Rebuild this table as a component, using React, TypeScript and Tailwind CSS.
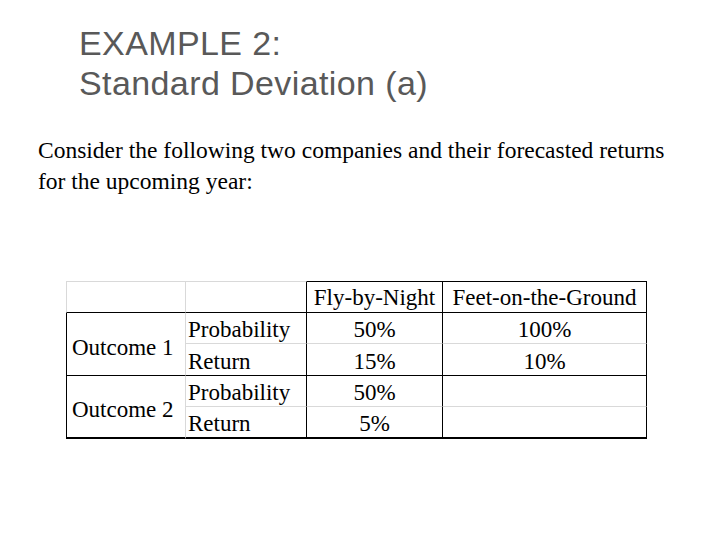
import React from 'react';

const DARK = 'border-black';
const LIGHT = 'border-[#d9d9d9]';

type Row = {
  label: string;
  fly: string;
  feet: string;
};

const OUTCOMES: { name: string; rows: Row[] }[] = [
  {
    name: 'Outcome 1',
    rows: [
      { label: 'Probability', fly: '50%', feet: '100%' },
      { label: 'Return', fly: '15%', feet: '10%' },
    ],
  },
  {
    name: 'Outcome 2',
    rows: [
      { label: 'Probability', fly: '50%', feet: '' },
      { label: 'Return', fly: '5%', feet: '' },
    ],
  },
];

function ReturnsTable() {
  return (
    <table
      className="ml-[66px] border-separate border-spacing-0 text-[23px] leading-none text-black"
      style={{ fontFamily: '"Liberation Serif", "Times New Roman", serif' }}
    >
      <colgroup>
        <col className="w-[120px]" />
        <col className="w-[121px]" />
        <col className="w-[136px]" />
        <col className="w-[204px]" />
      </colgroup>
      <thead>
        <tr className="h-[32px]">
          <th className={`border-l border-t border-r border-b ${LIGHT} border-b-black p-0`} />
          <th className={`border-t border-r border-b ${LIGHT} border-r-black border-b-black p-0`} />
          <th className={`border-t border-r border-b ${DARK} p-0 text-center font-normal`}>Fly-by-Night</th>
          <th className={`border-t border-r border-b ${DARK} p-0 text-center font-normal`}>Feet-on-the-Ground</th>
        </tr>
      </thead>
      <tbody>
        {OUTCOMES.map((outcome, gi) => {
          const last = gi === OUTCOMES.length - 1;
          const groupBottom = last ? 'border-b-2' : 'border-b';
          return outcome.rows.map((row, ri) => {
            const bottom = ri === 0 ? `border-b ${LIGHT}` : `${groupBottom} border-b-black`;
            return (
              <tr key={`${gi}-${ri}`} className={ri === 0 ? 'h-[31px]' : 'h-[32px]'}>
                {ri === 0 && (
                  <td
                    rowSpan={2}
                    className={`border-l border-r ${groupBottom} border-l-black ${LIGHT} border-b-black pl-[5px] pt-[6px] align-middle`}
                  >
                    {outcome.name}
                  </td>
                )}
                <td className={`border-r border-r-black ${bottom} pl-[2px] pt-[3px]`}>{row.label}</td>
                <td className={`border-r border-r-black ${bottom} pt-[3px] text-center`}>{row.fly}</td>
                <td className={`border-r border-r-black ${bottom} pt-[3px] text-center`}>{row.feet}</td>
              </tr>
            );
          });
        })}
      </tbody>
    </table>
  );
}

export default function App() {
  return (
    <div className="h-[540px] w-[720px] overflow-hidden bg-white">
      <h1
        className="ml-[79px] pt-[23px] text-[34px] font-normal leading-[40px] tracking-[0.4px] text-[#595959]"
        style={{ fontFamily: '"Liberation Sans", Arial, sans-serif' }}
      >
        EXAMPLE 2:
        <br />
        Standard Deviation (a)
      </h1>
      <p
        className="ml-[38px] mt-[32px] w-[680px] text-[23.5px] leading-[31px] text-black"
        style={{ fontFamily: '"Liberation Serif", "Times New Roman", serif' }}
      >
        Consider the following two companies and their forecasted returns
        <br />
        for the upcoming year:
      </p>
      <div className="mt-[84px]">
        <ReturnsTable />
      </div>
    </div>
  );
}
